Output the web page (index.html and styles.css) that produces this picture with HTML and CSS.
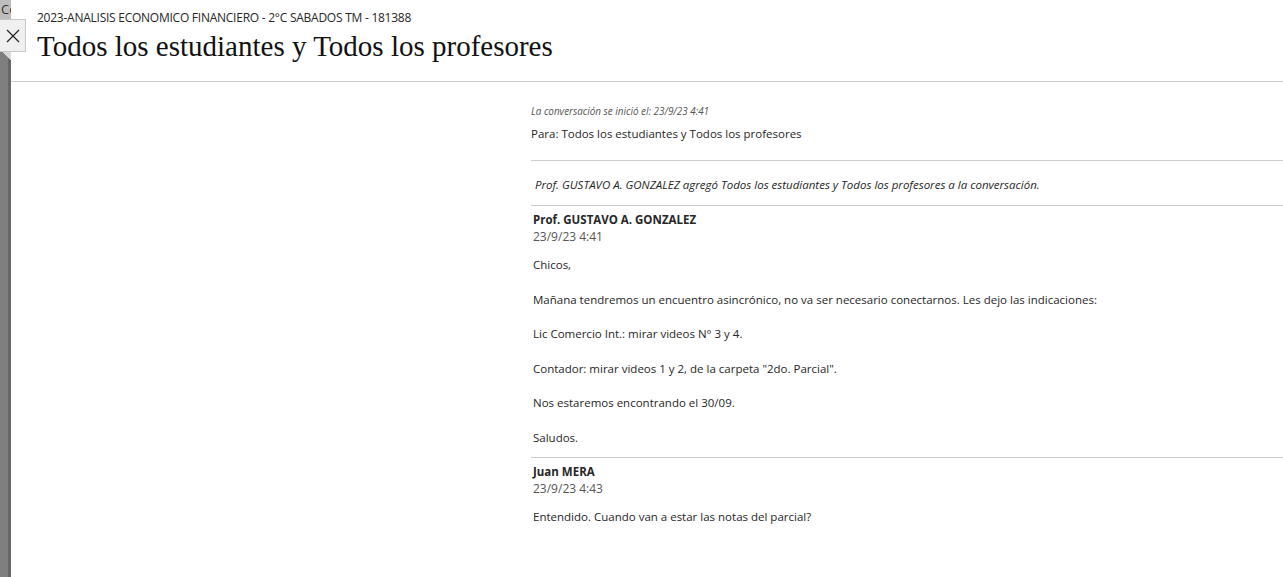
FILE: index.html
```html
<!DOCTYPE html>
<html lang="es">
<head>
<meta charset="utf-8">
<title>Conversación</title>
<link rel="stylesheet" href="styles.css">
</head>
<body>
<div class="page">
  <div class="backdrop">
    <div class="backdrop-top">Co</div>
    <div class="backdrop-strip"><div class="strip-corner"></div></div>
  </div>
  <button class="close" aria-label="Cerrar">
    <svg width="14" height="14" viewBox="0 0 14 14"><path d="M1 1L13 13M13 1L1 13" stroke="#262626" stroke-width="1.3" fill="none"/></svg>
  </button>
  <div class="panel">
    <header class="head">
      <div class="course">2023-ANALISIS ECONOMICO FINANCIERO - 2°C SABADOS TM - 181388</div>
      <h1 class="title">Todos los estudiantes y Todos los profesores</h1>
    </header>
    <main class="content">
      <div class="spacer"></div>
      <div class="thread">
        <div class="started">La conversación se inició el: 23/9/23 4:41</div>
        <div class="to">Para: Todos los estudiantes y Todos los profesores</div>
        <div class="notice">Prof. GUSTAVO A. GONZALEZ agregó Todos los estudiantes y Todos los profesores a la conversación.</div>
        <article class="msg">
          <div class="author">Prof. GUSTAVO A. GONZALEZ</div>
          <div class="date">23/9/23 4:41</div>
          <div class="body">
            <p>Chicos,</p>
            <p>Mañana tendremos un encuentro asincrónico, no va ser necesario conectarnos. Les dejo las indicaciones:</p>
            <p>Lic Comercio Int.: mirar videos N° 3 y 4.</p>
            <p>Contador: mirar videos 1 y 2, de la carpeta "2do. Parcial".</p>
            <p>Nos estaremos encontrando el 30/09.</p>
            <p>Saludos.</p>
          </div>
        </article>
        <article class="msg">
          <div class="author">Juan MERA</div>
          <div class="date">23/9/23 4:43</div>
          <div class="body">
            <p>Entendido. Cuando van a estar las notas del parcial?</p>
          </div>
        </article>
      </div>
    </main>
  </div>
</div>
</body>
</html>
```
FILE: styles.css
```css
* { box-sizing: border-box; }
html, body { margin: 0; padding: 0; height: 100%; overflow: hidden; }
body { font-family: "Open Sans", "Liberation Sans", sans-serif; color: #262626; background: #fff; }
.page { display: flex; height: 577px; position: relative; }
.backdrop { width: 11px; flex: none; display: flex; flex-direction: column; overflow: hidden; }
.backdrop-top { height: 19px; background: #bdbdbd; font-size: 13px; line-height: 19px; color: #333; white-space: nowrap; padding-left: 1px; }
.backdrop-strip { flex: 1; background: linear-gradient(to right, #7f7f7f 0 8px, #666 8px 11px); position: relative; }
.strip-corner { position: absolute; left: 0; top: 32px; width: 11px; height: 12px; background: linear-gradient(225deg, #d8d8d8 0 40%, transparent 40%); }
.close { position: absolute; left: 0; top: 19px; width: 26px; height: 33px; background: #f0f0f0; border: 1px solid #c8c8c8; border-left: none; padding: 0; display: flex; align-items: center; justify-content: center; z-index: 2; }
.panel { flex: 1; display: flex; flex-direction: column; background: #fff; }
.head { height: 82px; border-bottom: 1px solid #cdcdcd; padding: 10px 0 0 26px; }
.course { font-size: 12px; line-height: 16px; letter-spacing: -0.25px; color: #262626; }
.title { margin: 3px 0 0; font-family: "Liberation Serif", "DejaVu Serif", serif; font-weight: normal; font-size: 29px; line-height: 34px; color: #111; }
.content { display: flex; }
.spacer { width: 520px; flex: none; }
.thread { flex: 1; font-size: 11.5px; }
.started { font-style: italic; font-size: 9.9px; color: #555; margin-top: 23px; line-height: 12px; }
.to { margin-top: 8px; line-height: 17px; font-size: 11.5px; padding-bottom: 18px; border-bottom: 1px solid #cdcdcd; }
.notice { font-style: italic; padding: 16px 4px 12px; line-height: 16px; border-bottom: 1px solid #cdcdcd; }
.msg { padding: 5px 2px 0; border-bottom: 1px solid #cdcdcd; }
.msg:last-child { border-bottom: none; }
.author { font-weight: bold; line-height: 17px; }
.date { color: #555; line-height: 17px; font-size: 12px; }
.body { padding: 11px 0 2px; }
.body p { margin: 0 0 17.5px; line-height: 17px; }
.body p:last-child { margin-bottom: 9px; }
```
